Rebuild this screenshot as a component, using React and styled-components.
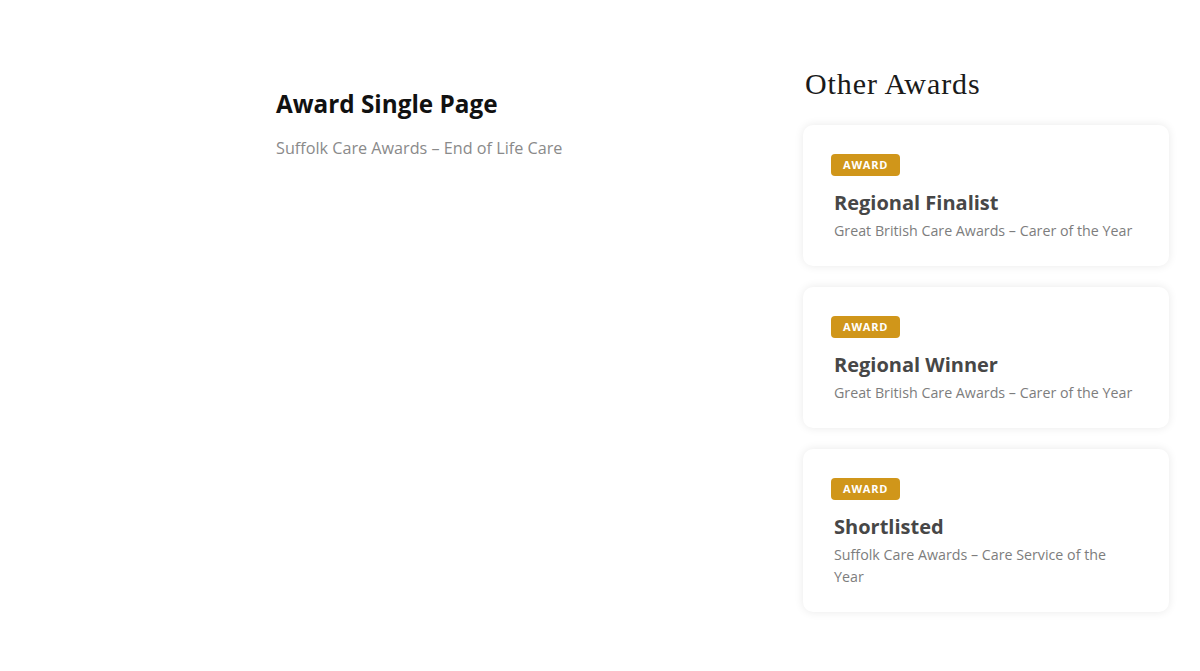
import React from 'react';
import styled, { createGlobalStyle } from 'styled-components';

const GlobalStyle = createGlobalStyle`
    html, body {
        margin: 0;
        padding: 0;
        background: #ffffff;
        font-family: "Open Sans", "Liberation Sans", sans-serif;
    }
`

const Page = styled.div`
    display: flex;
    align-items: flex-start;
    padding: 66px 0 40px 276px;
`

const Main = styled.div`
    width: 527px;
    padding-top: 22px;
`

const Title = styled.h1`
    margin: 0;
    font-size: 24.3px;
    line-height: 32px;
    font-weight: 700;
    color: #111111;
`

const Subtitle = styled.p`
    margin: 16px 0 0;
    font-size: 16.2px;
    line-height: 24px;
    color: #8a8a8a;
`

const Sidebar = styled.aside`
    width: 366px;
    display: flex;
    flex-direction: column;
    gap: 21px;
`

const SidebarHeading = styled.h2`
    margin: 0 0 2px 2px;
    font-family: "Liberation Serif", "DejaVu Serif", serif;
    font-weight: 400;
    font-size: 30px;
    line-height: 36px;
    letter-spacing: 0.9px;
    color: #1a1a1a;
`

const Card = styled.div`
    background: #ffffff;
    border-radius: 10px;
    box-shadow: 0 0 10px rgba(0, 0, 0, 0.09);
    padding: 29px 28px 24px;
    display: flex;
    flex-direction: column;
    align-items: flex-start;
`

const Badge = styled.span`
    display: inline-block;
    background: #d0961a;
    color: #ffffff;
    font-size: 11px;
    font-weight: 700;
    letter-spacing: 0.8px;
    line-height: 22px;
    padding: 0 12px;
    border-radius: 4px;
`

const CardTitle = styled.h3`
    margin: 14px 0 0 3px;
    font-size: 20px;
    line-height: 26px;
    font-weight: 700;
    color: #474747;
`

const CardText = styled.p`
    margin: 4px 0 0 3px;
    font-size: 14.25px;
    line-height: 22px;
    color: #7d7d7d;
    max-width: 303px;
`

const awards = [
    { title: 'Regional Finalist', text: 'Great British Care Awards – Carer of the Year' },
    { title: 'Regional Winner', text: 'Great British Care Awards – Carer of the Year' },
    { title: 'Shortlisted', text: 'Suffolk Care Awards – Care Service of the Year' },
]

export default function App() {
    return (
        <>
            <GlobalStyle />
            <Page>
                <Main>
                    <Title>Award Single Page</Title>
                    <Subtitle>Suffolk Care Awards – End of Life Care</Subtitle>
                </Main>
                <Sidebar>
                    <SidebarHeading>Other Awards</SidebarHeading>
                    {awards.map((a) => (
                        <Card key={a.title}>
                            <Badge>AWARD</Badge>
                            <CardTitle>{a.title}</CardTitle>
                            <CardText>{a.text}</CardText>
                        </Card>
                    ))}
                </Sidebar>
            </Page>
        </>
    )
}
